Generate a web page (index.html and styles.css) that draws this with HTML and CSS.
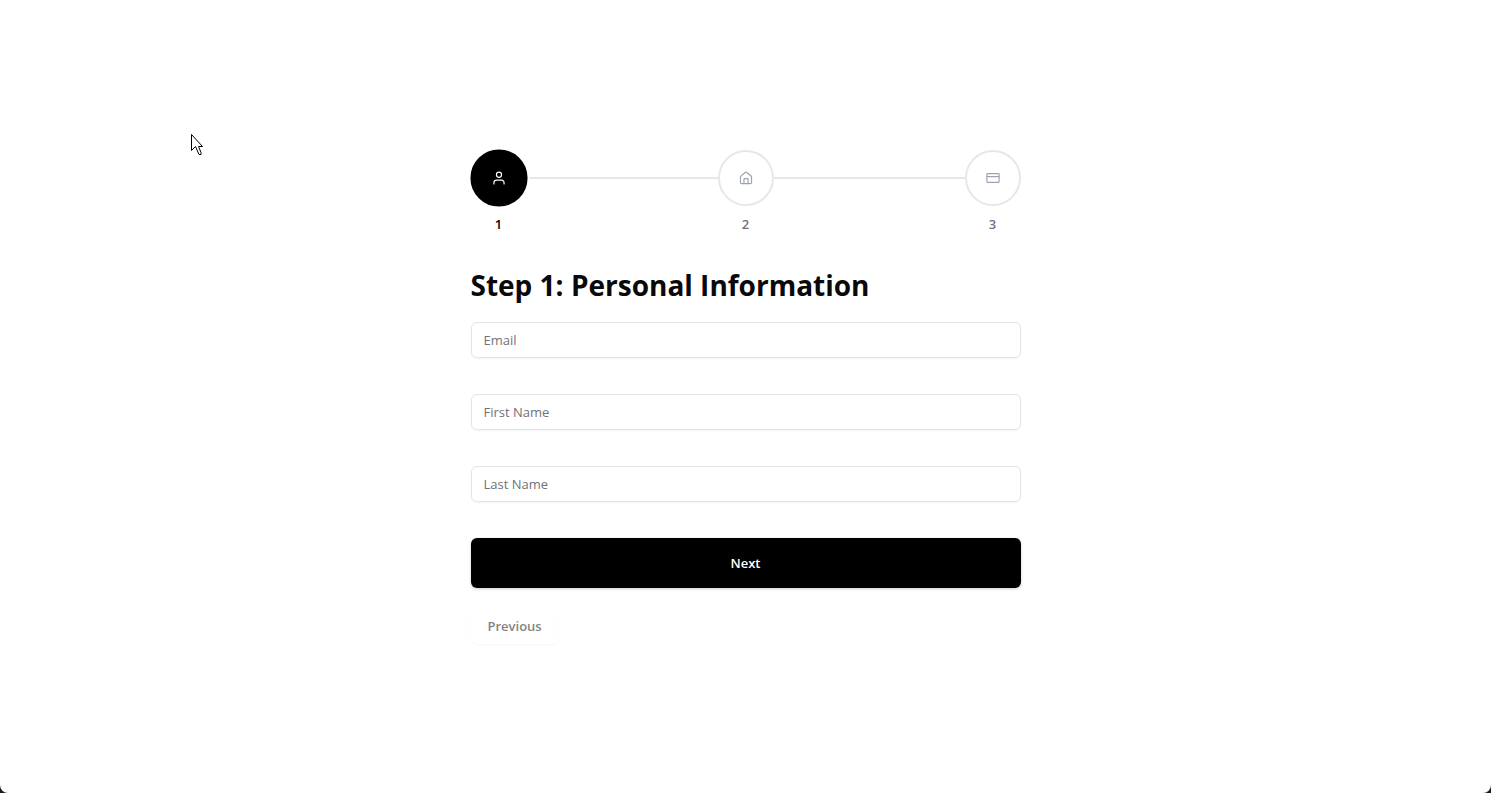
FILE: index.html
```html
<!DOCTYPE html>
<html lang="en">
<head>
<meta charset="utf-8">
<meta name="viewport" content="width=device-width, initial-scale=1">
<title>Personal Information</title>
<link rel="stylesheet" href="styles.css">
</head>
<body>
<main class="wizard">
  <ol class="stepper">
    <li class="step step-active" aria-current="step">
      <span class="step-circle">
        <svg class="icon" viewBox="0 0 24 24" aria-hidden="true"><path d="M20.5 22v-2a4.5 4.5 0 0 0-4.5-4.5H8A4.5 4.5 0 0 0 3.500 20v2"/><circle cx="12" cy="6.500" r="4.300"/></svg>
      </span>
      <span class="step-label">1</span>
    </li>
    <li class="connector" role="presentation"></li>
    <li class="step">
      <span class="step-circle">
        <svg class="icon" viewBox="0 0 24 24" aria-hidden="true"><path d="M15.500 21.500V14a1 1 0 0 0-1-1h-5a1 1 0 0 0-1 1v7.500"/><path d="M2.500 10.200a2 2 0 0 1 .7-1.500l7.300-6a2.300 2.300 0 0 1 3 0l7.300 6a2 2 0 0 1 .7 1.500v9.300a2 2 0 0 1-2 2h-15a2 2 0 0 1-2-2z"/></svg>
      </span>
      <span class="step-label">2</span>
    </li>
    <li class="connector" role="presentation"></li>
    <li class="step">
      <span class="step-circle">
        <svg class="icon" viewBox="0 0 24 24" aria-hidden="true"><rect width="21" height="15" x="1.5" y="4.5" rx="1.5"/><path d="M2 9.500h20"/></svg>
      </span>
      <span class="step-label">3</span>
    </li>
  </ol>
  <form class="form">
    <h1 class="title">Step 1: Personal Information</h1>
    <input class="field" type="email" placeholder="Email" aria-label="Email">
    <input class="field" type="text" placeholder="First Name" aria-label="First Name">
    <input class="field" type="text" placeholder="Last Name" aria-label="Last Name">
    <button class="button button-next" type="button">Next</button>
    <button class="button button-previous" type="button" disabled>Previous</button>
  </form>
</main>
<svg class="cursor" viewBox="0 0 12 21" aria-hidden="true"><path d="M.5.5v16l4-4 3.500 8h2v-2l-2.500-6h4z"/></svg>
</body>
</html>
```
FILE: styles.css
```css
* {
  box-sizing: border-box;
}

html {
  background: #1c1c20;
}

body {
  margin: 0;
  min-height: 100vh;
  display: flex;
  align-items: center;
  justify-content: center;
  background: #fff;
  border-radius: 0 0 8px 8px;
  color: #09090b;
  font-family: "Segoe UI", "Open Sans", "Noto Sans", sans-serif;
  font-size: 13px;
  line-height: 20px;
}

.wizard {
  width: 100%;
  max-width: 550px;
}

.stepper {
  display: flex;
  margin: 0 0 32px;
  padding: 0;
  list-style: none;
}

.step {
  display: flex;
  flex-direction: column;
  align-items: center;
  gap: 8px;
  color: #71717a;
  font-weight: 600;
}

.step-circle {
  display: grid;
  place-items: center;
  width: 56px;
  height: 56px;
  border: 2px solid #e5e7eb;
  border-radius: 50%;
  color: #9ca3af;
}

.step-active {
  z-index: 1;
  color: #000;
}

.step-active .step-circle {
  border-color: #000;
  background: #000;
  color: #fff;
  transform: scale(1.02);
  box-shadow: 0 0 0 2px #fff;
}

.connector {
  flex: 1;
  height: 2px;
  margin-top: 27px;
  background: #e5e7eb;
}

.icon {
  width: 14px;
  height: 14px;
  fill: none;
  stroke: currentColor;
  stroke-width: 2;
  stroke-linecap: round;
  stroke-linejoin: round;
}

.form {
  display: flex;
  flex-direction: column;
}

.title {
  margin: 0 0 18px;
  font-size: 28px;
  line-height: 38px;
  font-weight: 700;
}

.field {
  width: 100%;
  height: 36px;
  margin: 0 0 36px;
  padding: 4px 12px;
  border: 1px solid #e4e4e7;
  border-radius: 6px;
  background: transparent;
  box-shadow: 0 1px 2px rgb(0 0 0 / 5%);
  color: inherit;
  font: inherit;
}

.field::placeholder {
  color: #71717a;
  opacity: 1;
}

.button {
  border: 0;
  border-radius: 6px;
  font: inherit;
}

.button-next {
  height: 50px;
  margin-bottom: 20px;
  background: #000;
  box-shadow: 0 1px 3px rgb(0 0 0 / 20%);
  color: #fff;
  font-weight: 600;
}

.button-previous {
  align-self: flex-start;
  height: 36px;
  padding: 8px 17px;
  background: #fff;
  box-shadow: 0 1px 2px rgb(0 0 0 / 4%);
  color: #848485;
  font-weight: 600;
}

.cursor {
  position: absolute;
  top: 134px;
  left: 191px;
  width: 12px;
  height: 21px;
  fill: #fff;
  stroke: #000;
  stroke-width: 1;
}
```
